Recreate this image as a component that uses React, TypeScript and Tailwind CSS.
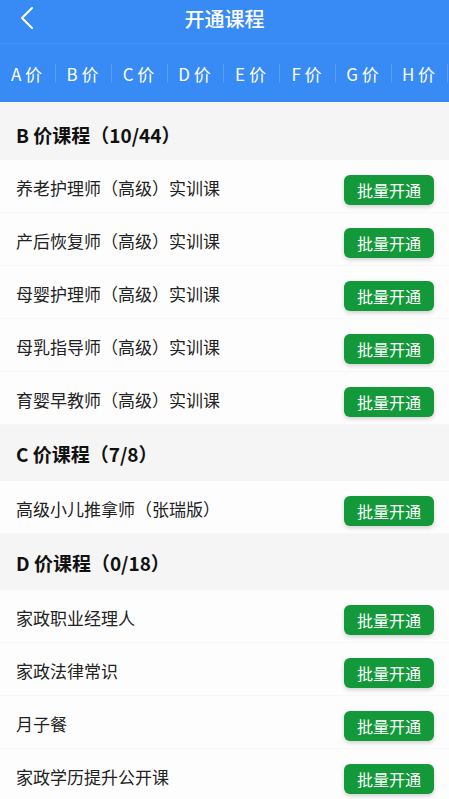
import React from "react";

const tabs = ["A", "B", "C", "D", "E", "F", "G", "H"];

const sections = [
  {
    title: "B 价课程（10/44）",
    first: true,
    items: [
      "养老护理师（高级）实训课",
      "产后恢复师（高级）实训课",
      "母婴护理师（高级）实训课",
      "母乳指导师（高级）实训课",
      "育婴早教师（高级）实训课",
    ],
  },
  { title: "C 价课程（7/8）", first: false, items: ["高级小儿推拿师（张瑞版）"] },
  {
    title: "D 价课程（0/18）",
    first: false,
    items: ["家政职业经理人", "家政法律常识", "月子餐", "家政学历提升公开课"],
  },
];

export default function App() {
  return (
    <div
      className="w-[449px] h-[799px] overflow-hidden bg-[#f5f5f5]"
      style={{ fontFamily: '"Noto Sans CJK SC", "Noto Sans", sans-serif' }}
    >
      <div className="bg-[#388bf5]">
        <div className="relative h-[44px] flex items-center justify-center border-b border-[#4592f6]">
          <svg
            className="absolute left-[18px] top-[6px]"
            width="18"
            height="24"
            viewBox="0 0 18 24"
            fill="none"
          >
            <path d="M14 2 L4 12 L14 22" stroke="white" strokeWidth="2" strokeLinecap="round" strokeLinejoin="round" />
          </svg>
          <span className="text-white text-[20px] font-medium leading-none pb-[6px]">开通课程</span>
        </div>
        <div className="h-[58px] flex items-center">
          {tabs.map((t) => (
            <div key={t} className="w-[56px] flex items-center">
              <span className="flex-1 text-center text-white text-[17px] leading-none pr-[2px]">
                {t} 价
              </span>
              <span className="w-px h-[18px] bg-[#5a9ff7]" />
            </div>
          ))}
        </div>
      </div>

      {sections.map((s) => (
        <div key={s.title}>
          <div
            className={
              s.first
                ? "h-[58px] flex items-center px-[16px] pt-[6px] bg-[#f5f5f5]"
                : "h-[56px] flex items-center px-[16px] bg-[#f5f5f5]"
            }
          >
            <span className="text-[19px] font-bold text-[#111] leading-none">{s.title}</span>
          </div>
          {s.items.map((it) => (
            <div
              key={it}
              className="h-[53px] flex items-center justify-between pl-[16px] pr-[15px] bg-[#fdfdfd] border-b border-[#f7f7f7]"
            >
              <span className="text-[17px] text-[#222] leading-none mt-[3px]">{it}</span>
              <button className="w-[90px] h-[30px] mt-[8px] rounded-[6px] bg-[#14993a] text-white text-[16px] leading-none flex items-center justify-center shadow-[0_2px_4px_rgba(0,0,0,0.18)]">
                批量开通
              </button>
            </div>
          ))}
        </div>
      ))}
    </div>
  );
}
